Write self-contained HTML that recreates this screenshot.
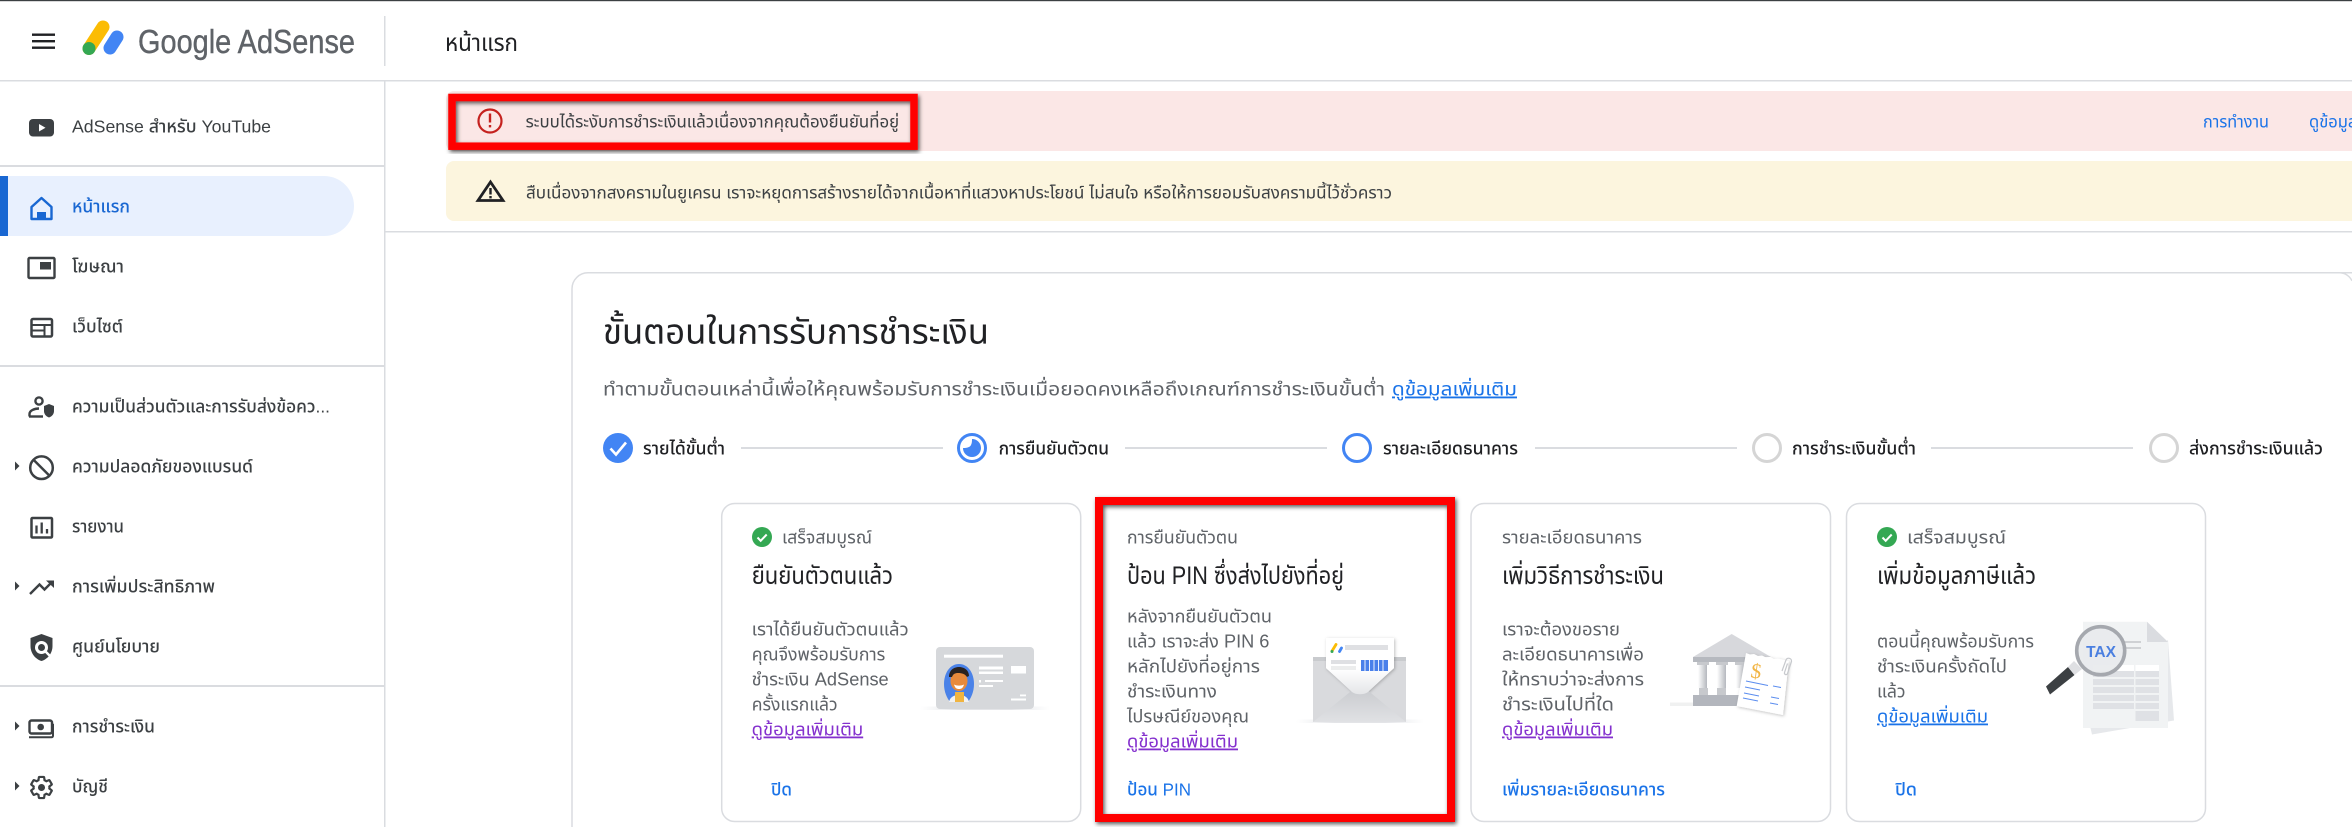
<!DOCTYPE html>
<html lang="th"><head><meta charset="utf-8"><title>Google AdSense</title>
<style>
html,body{margin:0;padding:0;background:#fff;width:2352px;height:827px;overflow:hidden}
svg{display:block}
text{font-family:"Liberation Sans","Noto Sans Thai","Noto Sans CJK SC",sans-serif}
.n{font-size:17.5px;fill:#3c4043;font-weight:500}
.b{font-size:18px;fill:#5f6368}
.s{font-size:16.5px;fill:#3c4043}
.t{font-size:25px;fill:#202124}
.l{font-size:18px;fill:#8430ce;text-decoration:underline}
.k{font-size:18px;fill:#1a73e8;text-decoration:underline}
.a{font-size:17.5px;fill:#1a73e8;font-weight:500}
.p{font-size:17.5px;fill:#202124;font-weight:500}
</style></head><body>
<svg width="2352" height="827" viewBox="0 0 2352 827" xmlns="http://www.w3.org/2000/svg">
<defs>
<filter id="ds" x="-10%" y="-10%" width="120%" height="125%"><feDropShadow dx="1.5" dy="2" stdDeviation="2" flood-color="#000" flood-opacity=".65"/></filter>
<filter id="ss" x="-20%" y="-20%" width="140%" height="140%"><feDropShadow dx="1" dy="1" stdDeviation="1.5" flood-color="#000" flood-opacity=".25"/></filter>
<linearGradient id="sh" x1="0" x2="1" y1="0" y2="0"><stop offset="0" stop-color="#e8eaed" stop-opacity="0"/><stop offset=".3" stop-color="#e3e4e7"/><stop offset=".7" stop-color="#e3e4e7"/><stop offset="1" stop-color="#e8eaed" stop-opacity="0"/></linearGradient>
<linearGradient id="col" x1="0" x2="1" y1="0" y2="0"><stop offset="0" stop-color="#fff"/><stop offset="1" stop-color="#b5b8be"/></linearGradient>
<linearGradient id="lt" x1="0" x2="0" y1="0" y2="1"><stop offset=".55" stop-color="#fff"/><stop offset="1" stop-color="#e4e5e8"/></linearGradient>
<linearGradient id="ev" x1="0" x2="0" y1="0" y2="1"><stop offset="0" stop-color="#c6c8cc"/><stop offset="1" stop-color="#e0e1e4"/></linearGradient>
</defs>

<rect x="0" y="0" width="2352" height="1.2" fill="#3c4043"/>

<!-- header -->
<rect x="0" y="80" width="2352" height="1.5" fill="#dadce0"/>
<rect x="384" y="16" width="1.5" height="50" fill="#dadce0"/>
<g fill="#202124"><rect x="32" y="33.500" width="23" height="2.400"/><rect x="32" y="40" width="23" height="2.400"/><rect x="32" y="46.500" width="23" height="2.400"/></g>
<path d="M89 48.500L103 27" stroke="#fbbc04" stroke-width="13" stroke-linecap="round"/>
<circle cx="89" cy="48.500" r="6.500" fill="#34a853"/>
<path d="M110 48L117 37" stroke="#4285f4" stroke-width="13" stroke-linecap="round"/>
<text x="138" y="53" textLength="217" lengthAdjust="spacingAndGlyphs" style="font-size:33px;fill:#5f6368;stroke:#5f6368;stroke-width:.4">Google AdSense</text>
<text x="445" y="51" textLength="73" lengthAdjust="spacingAndGlyphs" style="font-size:24px;fill:#202124">หน้าแรก</text>

<!-- sidebar -->
<rect x="384" y="80" width="1.5" height="747" fill="#dadce0"/>
<rect x="0" y="165" width="384" height="2" fill="#dadce0"/>
<rect x="0" y="365" width="384" height="2" fill="#dadce0"/>
<rect x="0" y="685" width="384" height="2" fill="#dadce0"/>
<path d="M0 176H324a30 30 0 0 1 0 60H0z" fill="#e8f0fe"/>
<rect x="0" y="176" width="8" height="60" fill="#1967d2"/>

<text class="n" x="72" y="132.500" textLength="199" lengthAdjust="spacingAndGlyphs">AdSense สำหรับ YouTube</text>
<text class="n" x="72" y="212.500" textLength="58" lengthAdjust="spacingAndGlyphs" style="fill:#1967d2">หน้าแรก</text>
<text class="n" x="72" y="272.500" textLength="52" lengthAdjust="spacingAndGlyphs">โฆษณา</text>
<text class="n" x="72" y="332.500" textLength="51" lengthAdjust="spacingAndGlyphs">เว็บไซต์</text>
<text class="n" x="72" y="412.500" textLength="258" lengthAdjust="spacingAndGlyphs">ความเป็นส่วนตัวและการรับส่งข้อคว...</text>
<text class="n" x="72" y="472.500" textLength="181" lengthAdjust="spacingAndGlyphs">ความปลอดภัยของแบรนด์</text>
<text class="n" x="72" y="532.500" textLength="52" lengthAdjust="spacingAndGlyphs">รายงาน</text>
<text class="n" x="72" y="592.500" textLength="143" lengthAdjust="spacingAndGlyphs">การเพิ่มประสิทธิภาพ</text>
<text class="n" x="72" y="652.500" textLength="88" lengthAdjust="spacingAndGlyphs">ศูนย์นโยบาย</text>
<text class="n" x="72" y="732.500" textLength="83" lengthAdjust="spacingAndGlyphs">การชำระเงิน</text>
<text class="n" x="72" y="792.500" textLength="36" lengthAdjust="spacingAndGlyphs">บัญชี</text>

<!-- sidebar arrows -->
<g fill="#3c4043"><path d="M15 461.500L19.500 466 15 470.500z"/><path d="M15 581.500L19.500 586 15 590.500z"/><path d="M15 721.500L19.500 726 15 730.500z"/><path d="M15 781.500L19.500 786 15 790.500z"/></g>

<!-- sidebar icons -->
<rect x="29" y="119" width="25" height="17.500" rx="4" fill="#3c4043"/><path d="M39 124l6.500 3.700L39 131.500z" fill="#fff"/>
<path d="M41.500 198L31.500 207V219H41.500H51.500V207z" fill="none" stroke="#1967d2" stroke-width="2.400" stroke-linejoin="round"/><path d="M37 219v-7h9v7z" fill="#1967d2"/>
<rect x="28.500" y="258" width="26" height="20" rx="1" fill="none" stroke="#3c4043" stroke-width="2.400"/><rect x="40" y="262" width="11" height="7.500" fill="#3c4043"/>
<rect x="31.500" y="319" width="20.500" height="17.500" rx="1.500" fill="none" stroke="#3c4043" stroke-width="2.500"/><path d="M31 325h21M31 330.500h14M44.500 325v11" stroke="#3c4043" stroke-width="2" fill="none"/>
<circle cx="39" cy="401" r="3.600" fill="none" stroke="#3c4043" stroke-width="2.400"/><path d="M29.500 416.500v-2.500c0-3.500 5-5.500 9.500-5.500" fill="none" stroke="#3c4043" stroke-width="2.400"/><path d="M29 416.500H43" stroke="#3c4043" stroke-width="2.400"/><path d="M49 404l5 2v5c0 3-2 5.500-5 6.500-3-1-5-3.500-5-6.500v-5z" fill="#3c4043"/>
<circle cx="41.500" cy="467.700" r="11.300" fill="none" stroke="#3c4043" stroke-width="2.500"/><path d="M33.500 459.700L49.500 475.700" stroke="#3c4043" stroke-width="2.500"/>
<rect x="31.500" y="518" width="20.500" height="19.500" rx="1" fill="none" stroke="#3c4043" stroke-width="2.500"/><path d="M36.500 525.500v8M41.700 522.500v11M47 529v4.500" stroke="#3c4043" stroke-width="2.300"/>
<path d="M30 594l9.500-9.500 5 5L52 582" fill="none" stroke="#3c4043" stroke-width="2.400"/><path d="M46 580.500h8v7.500z" fill="#3c4043"/>
<path d="M41.500 634l11 4v8c0 7-4.500 13-11 15-6.500-2-11-8-11-15v-8z" fill="#3c4043"/><circle cx="41.500" cy="647.500" r="6.500" fill="#fff"/><circle cx="41.500" cy="647.500" r="3.500" fill="#3c4043"/><path d="M45.500 651.500L51 657" stroke="#fff" stroke-width="2.500"/>
<rect x="29.500" y="720.500" width="22.500" height="13" rx="2" fill="#3c4043" fill-opacity="0" stroke="#3c4043" stroke-width="2.400"/><circle cx="40.700" cy="727" r="3.300" fill="#3c4043"/><path d="M29 737.500H51.500a1.500 1.500 0 0 0 1.500-1.500V724" fill="none" stroke="#3c4043" stroke-width="2" transform="translate(0 -.2)"/>
<g transform="translate(28.300 774.300) scale(1.100)"><path d="M19.140 12.940c.04-.3.06-.61.06-.94 0-.32-.02-.64-.07-.94l2.030-1.580c.18-.14.23-.41.12-.61l-1.920-3.320c-.12-.22-.37-.29-.59-.22l-2.390.96c-.5-.38-1.030-.7-1.620-.94l-.36-2.540c-.04-.24-.24-.41-.48-.41h-3.840c-.24 0-.43.17-.47.41l-.36 2.540c-.59.24-1.130.57-1.620.94l-2.390-.96c-.22-.08-.47 0-.59.22L2.740 8.870c-.12.21-.08.47.12.61l2.030 1.580c-.05.3-.09.63-.09.94s.02.64.07.94l-2.030 1.580c-.18.14-.23.41-.12.61l1.920 3.320c.12.22.37.29.59.22l2.390-.96c.5.38 1.030.7 1.620.94l.36 2.540c.05.24.24.41.48.41h3.840c.24 0 .44-.17.47-.41l.36-2.540c.59-.24 1.130-.56 1.620-.94l2.390.96c.22.08.47 0 .59-.22l1.920-3.320c.12-.22.07-.47-.12-.61l-2.010-1.580z" fill="none" stroke="#3c4043" stroke-width="2"/><circle cx="12" cy="12" r="3.200" fill="#3c4043"/></g>

<!-- banners -->
<path d="M454 91H2352V151H454a8 8 0 0 1-8-8V99a8 8 0 0 1 8-8z" fill="#fbe7e6"/>
<path d="M454 161H2352V221H454a8 8 0 0 1-8-8V169a8 8 0 0 1 8-8z" fill="#fcf5de"/>
<rect x="385" y="231" width="1967" height="1.500" fill="#dadce0"/>
<circle cx="490" cy="121" r="11.500" fill="none" stroke="#c5221f" stroke-width="2.200"/><rect x="488.800" y="113.500" width="2.400" height="9" fill="#c5221f"/><rect x="488.800" y="125" width="2.400" height="2.400" fill="#c5221f"/>
<text class="s" x="525.600" y="127.500" textLength="373.500" lengthAdjust="spacingAndGlyphs">ระบบได้ระงับการชำระเงินแล้วเนื่องจากคุณต้องยืนยันที่อยู่</text>
<path d="M490.500 182L503 200.500H478z" fill="none" stroke="#202124" stroke-width="2.800" stroke-linejoin="miter"/><rect x="489.300" y="188" width="2.400" height="6.500" fill="#202124"/><rect x="489.300" y="196" width="2.400" height="2.400" fill="#202124"/>
<text class="s" x="526" y="198.500" textLength="866" lengthAdjust="spacingAndGlyphs">สืบเนื่องจากสงครามในยูเครน เราจะหยุดการสร้างรายได้จากเนื้อหาที่แสวงหาประโยชน์ ไม่สนใจ หรือให้การยอมรับสงครามนี้ไว้ชั่วคราว</text>
<text x="2203" y="127.500" textLength="66" lengthAdjust="spacingAndGlyphs" style="font-size:16.500px;fill:#1a73e8">การทำงาน</text>
<text x="2309" y="127.500" textLength="100" lengthAdjust="spacingAndGlyphs" style="font-size:16.500px;fill:#1a73e8">ดูข้อมูลเพิ่มเติม</text>

<!-- main card -->
<path d="M2352.500 272.800H588a16 16 0 0 0-16 16V830" fill="none" stroke="#dadce0" stroke-width="1.500"/>
<path d="M2340 272.800a14 14 0 0 1 12 8" fill="none" stroke="#dadce0" stroke-width="1.500"/>
<text x="603" y="343.500" textLength="386" lengthAdjust="spacingAndGlyphs" style="font-size:35px;fill:#202124">ขั้นตอนในการรับการชำระเงิน</text>
<text x="603" y="395.500" textLength="782" lengthAdjust="spacingAndGlyphs" style="font-size:18.500px;fill:#5f6368">ทำตามขั้นตอนเหล่านี้เพื่อให้คุณพร้อมรับการชำระเงินเมื่อยอดคงเหลือถึงเกณฑ์การชำระเงินขั้นต่ำ</text>
<text x="1392" y="395.500" textLength="125" lengthAdjust="spacingAndGlyphs" style="font-size:18.500px;fill:#1a73e8;text-decoration:underline">ดูข้อมูลเพิ่มเติม</text>

<!-- stepper -->
<circle cx="618" cy="448" r="15" fill="#4285f4"/><path d="M610.500 448.500l5.500 6 10-12" fill="none" stroke="#fff" stroke-width="2.600"/>
<text class="p" x="643" y="454.500" textLength="82" lengthAdjust="spacingAndGlyphs">รายได้ขั้นต่ำ</text>
<rect x="741" y="447" width="202" height="2" fill="#dadce0"/>
<circle cx="972" cy="448" r="13.500" fill="none" stroke="#4285f4" stroke-width="3"/><path d="M972 439a9 9 0 1 1-9 9c4.500 0 7-1 8-3 1-2 1-4 1-6z" fill="#4285f4"/>
<text class="p" x="998.600" y="454.500" textLength="110.400" lengthAdjust="spacingAndGlyphs">การยืนยันตัวตน</text>
<rect x="1125" y="447" width="202" height="2" fill="#dadce0"/>
<circle cx="1357" cy="448" r="13.500" fill="none" stroke="#4285f4" stroke-width="3"/>
<text class="p" x="1383" y="454.500" textLength="135" lengthAdjust="spacingAndGlyphs">รายละเอียดธนาคาร</text>
<rect x="1535" y="447" width="202" height="2" fill="#dadce0"/>
<circle cx="1767" cy="448" r="13.500" fill="none" stroke="#d5d5d5" stroke-width="3"/>
<text class="p" x="1792" y="454.500" textLength="124" lengthAdjust="spacingAndGlyphs">การชำระเงินขั้นต่ำ</text>
<rect x="1931" y="447" width="202" height="2" fill="#dadce0"/>
<circle cx="2164" cy="448" r="13.500" fill="none" stroke="#d5d5d5" stroke-width="3"/>
<text class="p" x="2189" y="454.500" textLength="134" lengthAdjust="spacingAndGlyphs">ส่งการชำระเงินแล้ว</text>

<!-- step cards -->
<g fill="#fff" stroke="#dadce0" stroke-width="1.500">
<rect x="721.700" y="503.500" width="359" height="318" rx="13"/>
<rect x="1471" y="503.500" width="359.500" height="318" rx="13"/>
<rect x="1846.500" y="503.500" width="359" height="318" rx="13"/>
</g>

<!-- card 1 -->
<circle cx="762" cy="537" r="10" fill="#34a853"/><path d="M757.500 537.500l3.200 3.300 6-6.300" fill="none" stroke="#fff" stroke-width="2"/>
<text class="b" x="782" y="543.500" textLength="90" lengthAdjust="spacingAndGlyphs">เสร็จสมบูรณ์</text>
<text class="t" x="751.700" y="584" textLength="141.300" lengthAdjust="spacingAndGlyphs">ยืนยันตัวตนแล้ว</text>
<text class="b" x="751.700" y="635.500" textLength="157" lengthAdjust="spacingAndGlyphs">เราได้ยืนยันตัวตนแล้ว</text>
<text class="b" x="751.700" y="660.500" textLength="133.600" lengthAdjust="spacingAndGlyphs">คุณจึงพร้อมรับการ</text>
<text class="b" x="751.700" y="685.500" textLength="137" lengthAdjust="spacingAndGlyphs">ชำระเงิน AdSense</text>
<text class="b" x="751.700" y="710.500" textLength="86" lengthAdjust="spacingAndGlyphs">ครั้งแรกแล้ว</text>
<text class="l" x="751.700" y="735.500" textLength="111.500" lengthAdjust="spacingAndGlyphs">ดูข้อมูลเพิ่มเติม</text>
<text class="a" x="771" y="795.500" textLength="21" lengthAdjust="spacingAndGlyphs">ปิด</text>

<!-- id card art -->
<rect x="920" y="706.500" width="130" height="3.500" fill="url(#sh)"/>
<rect x="936" y="647" width="98" height="62" rx="4" fill="#d6d8db"/>
<rect x="944" y="654.700" width="59" height="3" fill="#fff"/>
<path d="M944 684c0-11 6-20 15-20s15 9 15 20c0 8-3 14-6 18h-18c-3-4-6-10-6-18z" fill="#4a82e8"/>
<path d="M949 702c1-5 5-7 10-7s9 2 10 7z" fill="#f1f1f1"/>
<rect x="955" y="692" width="9" height="10" fill="#f0b440"/>
<ellipse cx="959" cy="681" rx="8.500" ry="10" fill="#e88a3c"/>
<path d="M949 677c0-7 5-10 10-10s10 3 10 9l-2 1c-2-3-5-4-9-4-3 0-5 1-6 4z" fill="#2b2320"/>
<path d="M954 684.500c3 1.500 7 1.500 10 0-1 3.500-2.500 4.500-5 4.500s-4-1-5-4.500z" fill="#fff"/>
<g fill="#fff"><rect x="979" y="666.500" width="24" height="3"/><rect x="979" y="671.500" width="24" height="2.500"/><rect x="1011" y="666" width="15" height="7.500"/><rect x="979" y="680" width="2" height="2.500"/><rect x="985" y="680" width="18" height="2"/><rect x="979" y="685" width="14" height="2"/><rect x="1020" y="694.500" width="6" height="1.800"/><rect x="1011" y="698.500" width="15" height="2"/></g>

<!-- card 2 -->
<text class="b" x="1127" y="543.500" textLength="111" lengthAdjust="spacingAndGlyphs">การยืนยันตัวตน</text>
<text class="t" x="1127" y="584" textLength="217" lengthAdjust="spacingAndGlyphs">ป้อน PIN ซึ่งส่งไปยังที่อยู่</text>
<text class="b" x="1127" y="622.500" textLength="145" lengthAdjust="spacingAndGlyphs">หลังจากยืนยันตัวตน</text>
<text class="b" x="1127" y="647.500" textLength="142.400" lengthAdjust="spacingAndGlyphs">แล้ว เราจะส่ง PIN 6</text>
<text class="b" x="1127" y="672.500" textLength="133" lengthAdjust="spacingAndGlyphs">หลักไปยังที่อยู่การ</text>
<text class="b" x="1127" y="697.500" textLength="90" lengthAdjust="spacingAndGlyphs">ชำระเงินทาง</text>
<text class="b" x="1127" y="722.500" textLength="122" lengthAdjust="spacingAndGlyphs">ไปรษณีย์ของคุณ</text>
<text class="l" x="1127" y="747.500" textLength="111" lengthAdjust="spacingAndGlyphs">ดูข้อมูลเพิ่มเติม</text>
<text class="a" x="1127" y="795.500" textLength="64" lengthAdjust="spacingAndGlyphs">ป้อน PIN</text>

<!-- envelope art -->
<rect x="1296" y="719.500" width="128" height="3.500" fill="url(#sh)"/>
<rect x="1313" y="657" width="93" height="65" fill="#d9dadd"/>
<path d="M1313 657h93v4h-93z" fill="#c9cbce"/>
<path d="M1326 638h68v30l-28 25c-3.500 2-9 2-12 0l-28-25z" fill="url(#lt)" filter="url(#ss)"/>
<path d="M1313 722l47-38 46 38z" fill="url(#ev)"/>
<path d="M1326 638h68v30l-26 24c-4 3-12 3-16 0l-26-24z" fill="url(#lt)"/>
<path d="M1332 651l4-6.500" stroke="#fbbc04" stroke-width="2.800" stroke-linecap="round"/><circle cx="1332" cy="651.500" r="1.500" fill="#34a853"/><path d="M1339.500 651.500l2-3.500" stroke="#4285f4" stroke-width="2.800" stroke-linecap="round"/>
<rect x="1345" y="645" width="43" height="5" fill="#dfe0e3"/>
<rect x="1331" y="660" width="25" height="4" fill="#dfe0e3"/><rect x="1331" y="666" width="25" height="4" fill="#eceded"/>
<rect x="1361" y="660" width="27" height="11" fill="#4a80ea"/>
<path d="M1365 660v11M1369.500 660v11M1374 660v11M1378.500 660v11M1383 660v11" stroke="#fff" stroke-width=".9"/>

<!-- card 3 -->
<text class="b" x="1502" y="543.500" textLength="140" lengthAdjust="spacingAndGlyphs">รายละเอียดธนาคาร</text>
<text class="t" x="1502" y="584" textLength="162" lengthAdjust="spacingAndGlyphs">เพิ่มวิธีการชำระเงิน</text>
<text class="b" x="1502" y="635.500" textLength="118" lengthAdjust="spacingAndGlyphs">เราจะต้องขอราย</text>
<text class="b" x="1502" y="660.500" textLength="142" lengthAdjust="spacingAndGlyphs">ละเอียดธนาคารเพื่อ</text>
<text class="b" x="1502" y="685.500" textLength="142" lengthAdjust="spacingAndGlyphs">ให้ทราบว่าจะส่งการ</text>
<text class="b" x="1502" y="710.500" textLength="112" lengthAdjust="spacingAndGlyphs">ชำระเงินไปที่ใด</text>
<text class="l" x="1502" y="735.500" textLength="111" lengthAdjust="spacingAndGlyphs">ดูข้อมูลเพิ่มเติม</text>
<text class="a" x="1502" y="795.500" textLength="163" lengthAdjust="spacingAndGlyphs">เพิ่มรายละเอียดธนาคาร</text>

<!-- bank art -->
<rect x="1670" y="702.500" width="40" height="3.500" fill="#eceded" opacity=".8"/>
<path d="M1731.700 634L1771 657H1693z" fill="#d7d8dc"/>
<rect x="1693" y="657" width="60" height="5" fill="#b6b9bf"/>
<rect x="1697" y="662" width="12" height="3" fill="#c7c9cd"/><rect x="1716" y="662" width="12" height="3" fill="#c7c9cd"/><rect x="1735" y="662" width="12" height="3" fill="#c7c9cd"/>
<rect x="1698" y="665" width="9" height="23" fill="url(#col)"/><rect x="1717" y="665" width="9" height="23" fill="url(#col)"/><rect x="1736" y="665" width="9" height="23" fill="url(#col)"/>
<rect x="1699" y="688" width="9" height="7" fill="#c7c9cd"/><rect x="1717" y="688" width="9" height="7" fill="#c7c9cd"/>
<rect x="1693" y="695" width="55" height="11" fill="#b3b6bd"/>
<path d="M1746 653l4 1.500 4-.5 4 2 4-.5 4 2 4-.5 4 2 4-.5 10.700 2.500L1783 715l-46.300-9z" fill="#fff" filter="url(#ss)"/>
<text x="1756" y="678" text-anchor="middle" transform="rotate(8 1756 672)" style="font-size:21px;fill:#f2b544;font-family:'Liberation Serif',serif">$</text>
<g stroke="#5b8def" stroke-width="1.100"><path d="M1746 681l22 4.500M1745 687l15 3M1744 693l15 3M1743 698l15 3M1773 686l8 1.500M1771 697l8 1.500M1770 703l8 1.500"/></g>
<path d="M1782 671l4-11c1-3 6-2 5.500 1.500l-4 12c-1 2-3.500 1-3-1l3-9" fill="none" stroke="#c7c9cd" stroke-width="1.200"/>

<!-- card 4 -->
<circle cx="1887" cy="537" r="10" fill="#34a853"/><path d="M1882.500 537.500l3.200 3.300 6-6.300" fill="none" stroke="#fff" stroke-width="2"/>
<text class="b" x="1907" y="543.500" textLength="99" lengthAdjust="spacingAndGlyphs">เสร็จสมบูรณ์</text>
<text class="t" x="1877" y="584" textLength="159" lengthAdjust="spacingAndGlyphs">เพิ่มข้อมูลภาษีแล้ว</text>
<text class="b" x="1877" y="647.500" textLength="157" lengthAdjust="spacingAndGlyphs">ตอนนี้คุณพร้อมรับการ</text>
<text class="b" x="1877" y="672.500" textLength="130" lengthAdjust="spacingAndGlyphs">ชำระเงินครั้งถัดไป</text>
<text class="b" x="1877" y="697.500" textLength="28.600" lengthAdjust="spacingAndGlyphs">แล้ว</text>
<text class="k" x="1877" y="722.500" textLength="111" lengthAdjust="spacingAndGlyphs">ดูข้อมูลเพิ่มเติม</text>
<text class="a" x="1895" y="795.500" textLength="22" lengthAdjust="spacingAndGlyphs">ปิด</text>

<!-- tax art -->
<path d="M2092 734.500L2174 720.500 2168 640 2084 700z" fill="#e6e8eb"/>
<path d="M2083 621.700H2147L2168 642V728H2083z" fill="#f1f3f4"/>
<path d="M2147 621.700L2168 642H2147z" fill="#dadce0"/>
<rect x="2093" y="665" width="66" height="56" fill="#dfe1e5"/>
<rect x="2093" y="665" width="41" height="6" fill="#fff"/><rect x="2135" y="665" width="24" height="6" fill="#fff"/>
<g fill="#f1f3f4"><rect x="2093" y="677" width="66" height="2"/><rect x="2093" y="685" width="66" height="2"/><rect x="2093" y="693" width="66" height="2"/><rect x="2093" y="701" width="66" height="2"/><rect x="2093" y="709" width="66" height="2"/><rect x="2134" y="665" width="1.500" height="56"/><rect x="2093" y="711" width="41" height="10"/></g>
<path d="M2120 642h21M2120 648h21" stroke="#c4c6ca" stroke-width="1.500"/>
<path d="M2046 686.500L2068 667l6.500 8-24.500 19.500z" fill="#3c4043"/>
<path d="M2068 667l6-6 8 8-7.500 6z" fill="#dfe0e3"/>
<circle cx="2100.700" cy="650.700" r="24" fill="#e8eaed" fill-opacity=".92" stroke="#a5a8ae" stroke-width="3.600"/>
<text x="2101" y="657" text-anchor="middle" style="font-size:15.500px;font-weight:700;fill:#4a7fe0">TAX</text>

<!-- red annotations -->
<rect x="452" y="97.500" width="462" height="48.700" fill="none" stroke="#f00" stroke-width="7.500" filter="url(#ds)"/>
<rect x="1099" y="501" width="352" height="317" fill="none" stroke="#f00" stroke-width="8" filter="url(#ds)"/>
</svg>
</body></html>
